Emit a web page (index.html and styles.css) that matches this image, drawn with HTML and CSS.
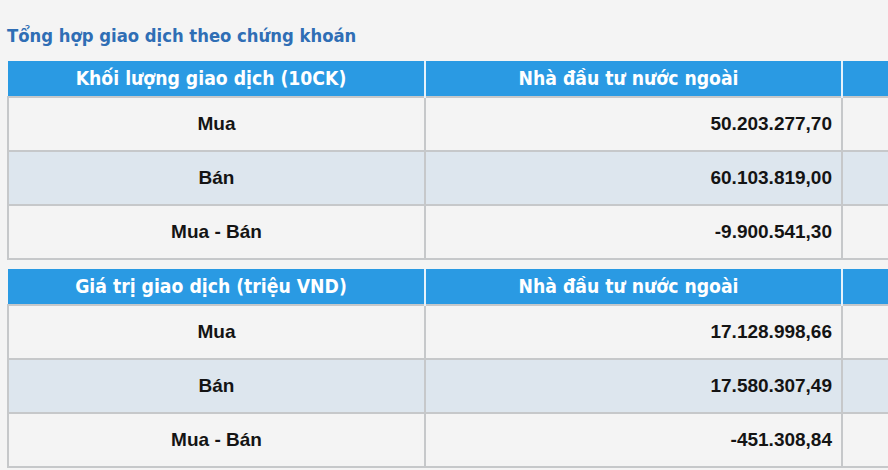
FILE: index.html
```html
<!DOCTYPE html>
<html lang="vi">
<head>
<meta charset="utf-8">
<title>Tổng hợp giao dịch theo chứng khoán</title>
<link rel="stylesheet" href="styles.css">
</head>
<body>
<div class="page">
  <h2 class="title">Tổng hợp giao dịch theo chứng khoán</h2>
  <table class="grid">
    <colgroup><col class="c1"><col class="c2"><col class="c3"></colgroup>
    <thead>
      <tr><th>Khối lượng giao dịch (10CK)</th><th>Nhà đầu tư nước ngoài</th><th></th></tr>
    </thead>
    <tbody>
      <tr><td class="label">Mua</td><td class="num">50.203.277,70</td><td></td></tr>
      <tr class="alt"><td class="label">Bán</td><td class="num">60.103.819,00</td><td></td></tr>
      <tr><td class="label">Mua - Bán</td><td class="num">-9.900.541,30</td><td></td></tr>
    </tbody>
  </table>
  <table class="grid">
    <colgroup><col class="c1"><col class="c2"><col class="c3"></colgroup>
    <thead>
      <tr><th>Giá trị giao dịch (triệu VND)</th><th>Nhà đầu tư nước ngoài</th><th></th></tr>
    </thead>
    <tbody>
      <tr><td class="label">Mua</td><td class="num">17.128.998,66</td><td></td></tr>
      <tr class="alt"><td class="label">Bán</td><td class="num">17.580.307,49</td><td></td></tr>
      <tr><td class="label">Mua - Bán</td><td class="num">-451.308,84</td><td></td></tr>
    </tbody>
  </table>
</div>
</body>
</html>
```
FILE: styles.css
```css
html, body {
  margin: 0;
  padding: 0;
  background: #f4f4f4;
  overflow: hidden;
}
.page {
  padding: 25px 0 0 7px;
  width: 1300px;
}
.title {
  margin: 0 0 14px 0;
  font-family: "DejaVu Sans Condensed", "DejaVu Sans", sans-serif;
  font-weight: bold;
  font-size: 18.3px;
  line-height: 22px;
  color: #2f6eb5;
}
.grid {
  border-collapse: collapse;
  table-layout: fixed;
  width: 1250px;
  margin-bottom: 9px;
}
.c1 { width: 417px; }
.c2 { width: 417px; }
.grid th {
  background: #2a9ae3;
  color: #fff;
  height: 35px;
  padding: 0 10px 0 0;
  font-family: "DejaVu Sans Condensed", "DejaVu Sans", sans-serif;
  font-weight: bold;
  font-size: 19.2px;
  text-align: center;
  border-left: 2px solid #e6f2fb;
}
.grid th:first-child { border-left: none; }
.grid td {
  height: 52px;
  padding: 0 9px;
  border: 2px solid #c6c8ca;
  background: #f4f4f4;
  font-family: "Liberation Sans", Arial, sans-serif;
  font-weight: bold;
  font-size: 19px;
  color: #141414;
}
.grid tr.alt td { background: #dde6ee; }
.grid td.label { text-align: center; }
.grid td.num { text-align: right; }
```
